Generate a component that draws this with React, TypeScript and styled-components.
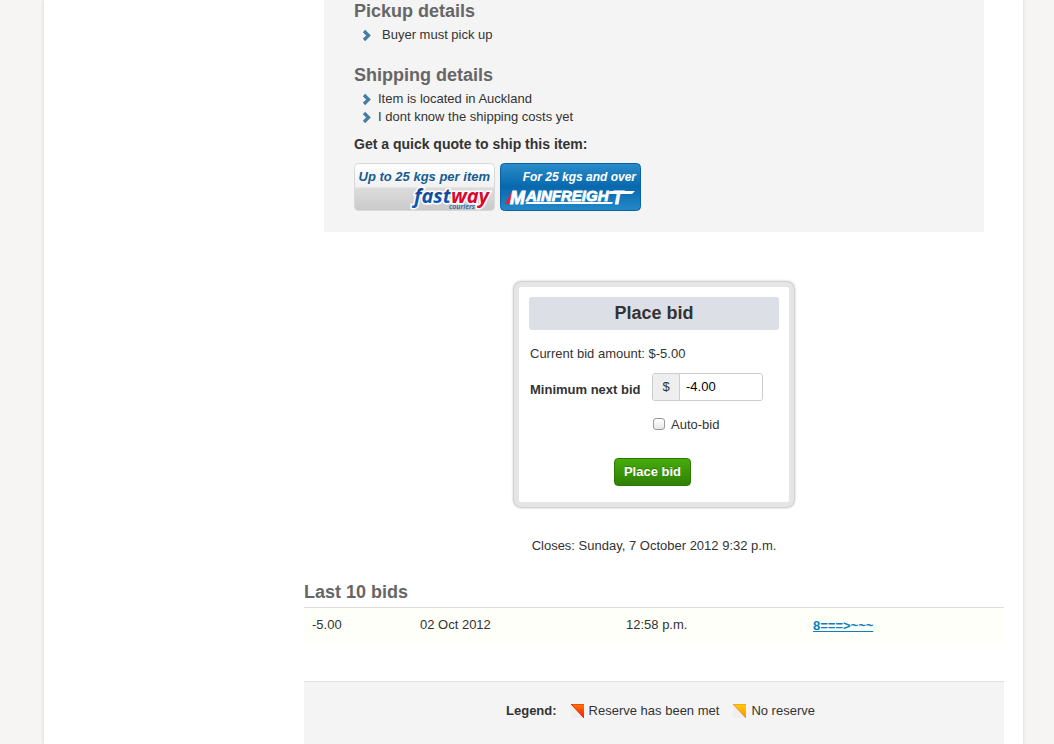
import React from "react";
import styled, { createGlobalStyle } from "styled-components";

const GlobalStyle = createGlobalStyle`
  *, *::before, *::after { box-sizing: border-box; }
  body {
    margin: 0;
    background: #f6f5f3;
    color: #333;
    font: 13px/18px "Liberation Sans", Arial, sans-serif;
  }
`;

const Shell = styled.div`
  min-height: 100vh;
  display: flex;
  flex-direction: column;
  padding: 0 31px 0 44px;
`;

const Page = styled.main`
  flex: 1;
  display: flex;
  flex-direction: column;
  padding: 0 19px 0 260px;
  background: #fff;
  box-shadow: 0 0 4px rgba(0, 0, 0, 0.14);
`;

const Details = styled.section`
  margin: 0 20px;
  padding: 0 30px 21px;
  background: #f4f4f4;
`;

const Heading = styled.h2`
  margin: 0;
  color: #666;
  font-size: 18px;
  line-height: 22px;
`;

const List = styled.ul<{ $gap: number; $after: number }>`
  list-style: none;
  margin: 4px 0 ${(p) => p.$after}px;
  padding: 0 0 0 8px;

  li {
    display: flex;
    align-items: center;
    gap: ${(p) => p.$gap}px;
  }
`;

const QuoteTitle = styled.h3`
  margin: 0 0 10px;
  font-size: 14px;
  line-height: 18px;
`;

const Quotes = styled.div`
  display: flex;
  gap: 5px;
`;

const QuoteLink = styled.a`
  display: block;
  height: 48px;
`;

const BidCard = styled.form`
  align-self: center;
  width: 280px;
  margin: 50px 0 30px;
  padding: 10px 10px 16px;
  border: 5px solid #e5e5e5;
  border-radius: 7px;
  background: #fff;
  box-shadow: 0 0 3px rgba(0, 0, 0, 0.5);
`;

const BidTitle = styled.h2`
  margin: 0 0 15px;
  border-radius: 3px;
  background: #dcdfe6;
  font-size: 18px;
  line-height: 33px;
  text-align: center;
`;

const CurrentBid = styled.p`
  margin: 0 0 10px;
  padding-left: 1px;
`;

const Field = styled.div`
  display: grid;
  grid-template-columns: 122px auto;
  justify-content: start;
  align-items: center;
  padding-left: 1px;

  > label {
    padding-top: 6px;
    font-weight: bold;
  }
`;

const Money = styled.div`
  display: flex;
  width: 111px;
  height: 28px;
  border: 1px solid #ccc;
  border-radius: 3px;
  overflow: hidden;

  span {
    width: 27px;
    border-right: 1px solid #ccc;
    background: #eee;
    line-height: 26px;
    text-align: center;
  }

  input {
    flex: 1;
    min-width: 0;
    padding: 0 6px;
    border: 0;
    color: #000;
    background: #fff;
    font: inherit;
  }
`;

const AutoBid = styled.label`
  display: flex;
  align-items: center;
  gap: 6px;
  margin: 15px 0 24px 124px;

  input {
    appearance: none;
    width: 12px;
    height: 12px;
    margin: 0 0 2px;
    border: 1px solid #999;
    border-radius: 3px;
    background: linear-gradient(#fff, #e6e6e6);
  }

  input:checked { background: #3b7fb5; }
`;

const BidButton = styled.button`
  display: block;
  width: 77px;
  height: 28px;
  margin: 0 0 0 85px;
  padding: 0;
  border: 1px solid #2c7a04;
  border-radius: 4px;
  color: #fff;
  background: linear-gradient(#45ad08, #2f8003);
  font: bold 13px/18px "Liberation Sans", Arial, sans-serif;
  text-shadow: 0 -1px 0 rgba(0, 0, 0, 0.25);
`;

const Closes = styled.p`
  margin: 0 0 26px;
  text-align: center;
`;

const BidTable = styled.table`
  width: 100%;
  margin: 4px 0 38px;
  border-collapse: separate;
  border-spacing: 0;
  border-top: 1px solid #ddd;
  table-layout: fixed;

  td {
    height: 35px;
    padding: 8px 8px 9px;
    background: #fefff8;
    vertical-align: top;
  }

  td:nth-child(1) { width: 108px; }
  td:nth-child(2) { width: 206px; }
  td:nth-child(3) { width: 187px; }
  td:nth-child(4) { padding-top: 9px; padding-bottom: 8px; }

  a {
    color: #0a80bf;
    font-weight: bold;
  }
`;

const Legend = styled.footer`
  flex: 1;
  display: flex;
  align-items: flex-start;
  justify-content: center;
  gap: 14px;
  padding: 20px 0 24px 13px;
  border-top: 1px solid #e2e2e2;
  background: #f4f4f4;
`;

const LegendItem = styled.span`
  display: flex;
  align-items: center;
  gap: 5px;
`;

function Chevron() {
  return (
    <svg width="10" height="12" viewBox="0 0 10 12" aria-hidden="true">
      <path d="M2 2 L6.5 6.5 L2 11" fill="none" stroke="#457ea5" strokeWidth="3.3" />
    </svg>
  );
}

function Corner({ id, from, to, edge }: { id: string; from: string; to: string; edge: string }) {
  return (
    <svg width="13" height="14" viewBox="0 0 13 14" aria-hidden="true">
      <defs>
        <linearGradient id={id} x1="0" y1="0" x2="0" y2="1">
          <stop offset="0" stopColor={from} />
          <stop offset="1" stopColor={to} />
        </linearGradient>
      </defs>
      <path d="M0 0 L13 14 H0 Z" fill="#efefef" />
      <path d="M0 0 H13 V14 Z" fill={`url(#${id})`} />
      <path d="M0 0 L13 14" stroke={edge} strokeWidth="1" />
      <path d="M0 0.5 H13" stroke={edge} strokeWidth="1" opacity="0.5" />
    </svg>
  );
}

const sans = '"Liberation Sans", Arial, sans-serif';

function FastwayBadge() {
  return (
    <svg width="141" height="48" viewBox="0 0 141 48">
      <defs>
        <linearGradient id="fw" x1="0" y1="0" x2="0" y2="1">
          <stop offset="0" stopColor="#fff" />
          <stop offset="0.5" stopColor="#f1f1f1" />
          <stop offset="0.52" stopColor="#dcdcdc" />
          <stop offset="1" stopColor="#cacaca" />
        </linearGradient>
        <linearGradient id="fwBlue" x1="0" y1="0" x2="0" y2="1">
          <stop offset="0.2" stopColor="#1a3f8c" />
          <stop offset="0.8" stopColor="#0a5cb4" />
        </linearGradient>
      </defs>
      <rect x="0.5" y="0.5" width="140" height="47" rx="4" fill="url(#fw)" stroke="#d8d8d8" />
      <text x="136" y="18" textAnchor="end" fontFamily={sans} fontSize="13" fontWeight="bold" fontStyle="italic" fill="#175c92">Up to 25 kgs per item</text>
      <text x="135" y="40" textAnchor="end" fontFamily='"Open Sans", sans-serif' fontSize="20" fontWeight="700" fontStyle="italic" stroke="#fff" strokeWidth="3" paintOrder="stroke" fill="url(#fwBlue)">
        fast<tspan fill="#d8072e">way</tspan>
      </text>
      <text x="95" y="46" fontFamily='"Open Sans", sans-serif' fontSize="7" fontWeight="600" fontStyle="italic" fill="#24609f">couriers</text>
    </svg>
  );
}

function MainfreightBadge() {
  return (
    <svg width="141" height="48" viewBox="0 0 141 48">
      <defs>
        <linearGradient id="mf" x1="0" y1="0" x2="0" y2="1">
          <stop offset="0" stopColor="#2a8cc9" />
          <stop offset="0.5" stopColor="#0868ae" />
          <stop offset="1" stopColor="#2389c8" />
        </linearGradient>
      </defs>
      <rect x="0.5" y="0.5" width="140" height="47" rx="4" fill="url(#mf)" stroke="#0b63a3" />
      <text x="136" y="18" textAnchor="end" fontFamily={sans} fontSize="12" fontWeight="bold" fontStyle="italic" fill="#fff">For 25 kgs and over</text>
      <path d="M5 41 L12 28 H16 L9 41 Z" fill="#e3202c" />
      <text x="10" y="41" fontFamily={sans} fontSize="18" fontWeight="bold" fontStyle="italic" fill="#fff" stroke="#fff" strokeWidth="0.8">
        M<tspan fontSize="15" x="26" y="38">AINFREIGH</tspan><tspan fontSize="18" x="112" y="41">T</tspan>
      </text>
      <path d="M26.5 39 H113 L112 41 H25.5 Z" fill="#fff" />
      <path d="M110 28 H135 L132 31 H108.5 Z" fill="#fff" />
    </svg>
  );
}

export default function App() {
  return (
    <>
      <GlobalStyle />
      <Shell>
        <Page>
          <Details>
            <Heading>Pickup details</Heading>
            <List $gap={10} $after={20}>
              <li><Chevron />Buyer must pick up</li>
            </List>
            <Heading>Shipping details</Heading>
            <List $gap={6} $after={9}>
              <li><Chevron />Item is located in Auckland</li>
              <li><Chevron />I dont know the shipping costs yet</li>
            </List>
            <QuoteTitle>Get a quick quote to ship this item:</QuoteTitle>
            <Quotes>
              <QuoteLink href="#fastway"><FastwayBadge /></QuoteLink>
              <QuoteLink href="#mainfreight"><MainfreightBadge /></QuoteLink>
            </Quotes>
          </Details>

          <BidCard onSubmit={(e) => e.preventDefault()}>
            <BidTitle>Place bid</BidTitle>
            <CurrentBid>Current bid amount: $-5.00</CurrentBid>
            <Field>
              <label htmlFor="bid">Minimum next bid</label>
              <Money>
                <span>$</span>
                <input id="bid" type="text" defaultValue="-4.00" />
              </Money>
            </Field>
            <AutoBid><input type="checkbox" />Auto-bid</AutoBid>
            <BidButton type="submit">Place bid</BidButton>
          </BidCard>

          <Closes>Closes: Sunday, 7 October 2012 9:32 p.m.</Closes>

          <Heading>Last 10 bids</Heading>
          <BidTable>
            <tbody>
              <tr>
                <td>-5.00</td>
                <td>02 Oct 2012</td>
                <td>12:58 p.m.</td>
                <td><a href="#bidder">8===&gt;~~~</a></td>
              </tr>
            </tbody>
          </BidTable>

          <Legend>
            <strong>Legend:</strong>
            <LegendItem><Corner id="met" from="#ff7a00" to="#ff1800" edge="#e82400" />Reserve has been met</LegendItem>
            <LegendItem><Corner id="none" from="#ffd000" to="#ff9000" edge="#f58a2a" />No reserve</LegendItem>
          </Legend>
        </Page>
      </Shell>
    </>
  );
}
